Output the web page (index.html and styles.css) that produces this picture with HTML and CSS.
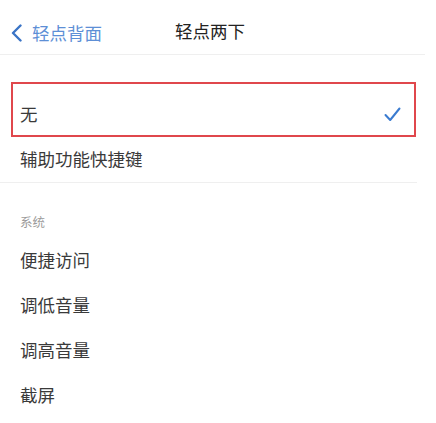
FILE: index.html
```html
<!DOCTYPE html>
<html lang="zh-CN">
<head>
<meta charset="utf-8">
<title>轻点两下</title>
<link rel="stylesheet" href="styles.css">
</head>
<body>
<div class="screen">
  <header class="nav">
    <a class="back">
      <svg class="chev" width="11" height="18" viewBox="0 0 11 18"><path d="M9.5 1.5 L2 9 L9.5 16.5" fill="none" stroke="#3a74c6" stroke-width="2.4" stroke-linecap="round" stroke-linejoin="round"/></svg>
      <span class="back-text">轻点背面</span>
    </a>
    <h1 class="title">轻点两下</h1>
  </header>

  <section class="group first">
    <div class="highlight">
      <div class="row sel">
        <span>无</span>
        <svg class="check" width="17" height="15" viewBox="0 0 17 15"><path d="M1.5 8 L6.2 13 L15.5 1.5" fill="none" stroke="#3a7bd0" stroke-width="2" stroke-linecap="round" stroke-linejoin="round"/></svg>
      </div>
    </div>
    <div class="row plain last">辅助功能快捷键</div>
  </section>

  <section class="group">
    <div class="group-head">系统</div>
    <div class="row plain">便捷访问</div>
    <div class="row plain">调低音量</div>
    <div class="row plain">调高音量</div>
    <div class="row plain">截屏</div>
  </section>
</div>
</body>
</html>
```

FILE: styles.css
```css
html, body {
  margin: 0;
  padding: 0;
  background: #ffffff;
}
body {
  font-family: "Noto Sans CJK SC", "Noto Sans", sans-serif;
  color: #3a3a3a;
  width: 436px;
  height: 423px;
  overflow: hidden;
}
.screen {
  display: flex;
  flex-direction: column;
}
.nav {
  box-sizing: content-box;
  border-bottom: 1px solid #efefef;
  margin-right: 11px;
  display: flex;
  align-items: center;
  padding-top: 11px;
  height: 43px;
}
.back {
  display: flex;
  align-items: center;
  padding-left: 11px;
}
.chev {
  display: block;
}
.back-text {
  margin-left: 10px;
  font-size: 17.5px;
  color: #5d8fd6;
  line-height: 24px;
}
.title {
  margin: 0 0 0 73px;
  font-size: 17.5px;
  font-weight: 400;
  color: #222222;
  line-height: 24px;
  position: relative;
  top: -2px;
}
.group.first {
  padding-top: 27px;
}
.highlight {
  margin: 0 20px 0 11px;
  border: 2px solid #e0474c;
  padding: 10px 13px 0 7px;
}
.row {
  display: flex;
  align-items: center;
  font-size: 17.5px;
  line-height: 24px;
  color: #3a3a3a;
}
.row.sel {
  height: 41px;
  padding-bottom: 2px;
  box-sizing: border-box;
  justify-content: space-between;
}
.check {
  display: block;
  margin-top: 1px;
}
.row.plain {
  height: 45px;
  padding-left: 20px;
  padding-bottom: 2px;
  box-sizing: border-box;
}
.row.last {
  border-bottom: 1px solid #efefef;
  margin-right: 19px;
  height: 46px;
}
.group-head {
  padding: 31px 0 8px 20px;
  font-size: 12.5px;
  line-height: 16px;
  color: #9a9a9a;
}
```
